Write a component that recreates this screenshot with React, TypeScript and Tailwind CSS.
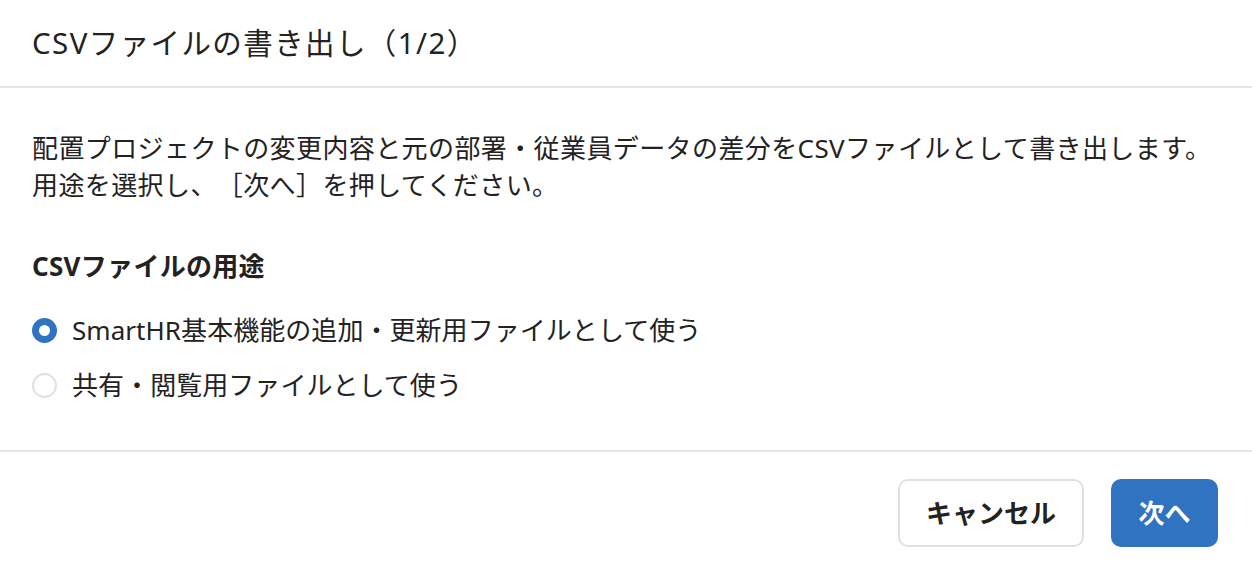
import { useState } from "react";

const options = [
  { id: "smarthr", label: "SmartHR基本機能の追加・更新用ファイルとして使う" },
  { id: "share", label: "共有・閲覧用ファイルとして使う" },
];

const App = () => {
  const [selected, setSelected] = useState("smarthr");

  return (
    <div
      className="w-[1252px] h-[563px] bg-white text-[#23221f] flex flex-col overflow-hidden [text-spacing-trim:space-all]"
      style={{ fontFamily: '"Noto Sans", "Noto Sans CJK JP", sans-serif' }}
    >
      {/* header */}
      <header className="h-[88px] shrink-0 flex items-center px-8 border-b-2 border-[#e6e6e6]">
        <h1 className="text-[29.5px] leading-none tracking-[1.4px]">
          CSVファイルの書き出し（1/2）
        </h1>
      </header>

      {/* body */}
      <section className="flex-1 px-8 pt-[42px]">
        <p className="text-[26px] leading-[37px] tracking-[0.4px]">
          配置プロジェクトの変更内容と元の部署・従業員データの差分をCSVファイルとして書き出します。
          <br />
          用途を選択し、［次へ］を押してください。
        </p>

        <h2 className="mt-[44px] text-[26px] leading-[37px] font-bold tracking-[0.3px]">
          CSVファイルの用途
        </h2>

        <div className="mt-[27px] flex flex-col gap-[18px]">
          {options.map((o) => {
            const on = selected === o.id;
            return (
              <label
                key={o.id}
                className="flex items-center gap-[15px] cursor-pointer h-[37px]"
                onClick={() => setSelected(o.id)}
              >
                <span
                  className={
                    on
                      ? "w-[25px] h-[25px] rounded-full bg-[#2f73c1] flex items-center justify-center shrink-0"
                      : "w-[25px] h-[25px] rounded-full border-2 border-[#e3e1de] bg-white shrink-0"
                  }
                >
                  {on && <span className="w-[11px] h-[11px] rounded-full bg-white" />}
                </span>
                <span className="text-[26px] leading-[37px] tracking-[0.05px]">{o.label}</span>
              </label>
            );
          })}
        </div>
      </section>

      {/* footer */}
      <footer className="h-[113px] shrink-0 border-t-2 border-[#e6e6e6] flex items-start justify-end gap-[27px] pt-[27px] pr-[34px]">
        <button className="h-[68px] w-[186px] rounded-[10px] border-2 border-[#e3e1de] bg-white text-[26px] font-bold">
          キャンセル
        </button>
        <button className="h-[68px] w-[107px] rounded-[10px] bg-[#2f73c1] text-white text-[26px] font-bold">
          次へ
        </button>
      </footer>
    </div>
  );
};

export default App;
